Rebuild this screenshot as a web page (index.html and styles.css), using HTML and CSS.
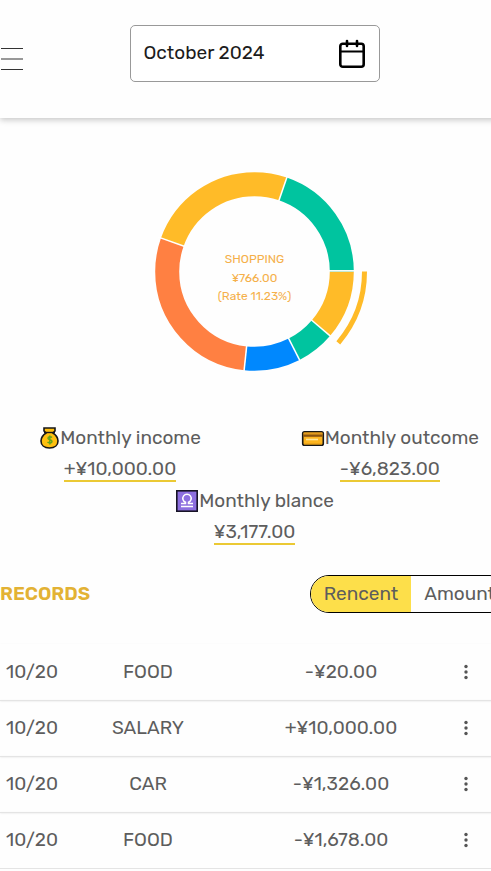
FILE: index.html
```html
<!DOCTYPE html>
<html lang="en">
<head>
<meta charset="utf-8">
<meta name="viewport" content="width=device-width, initial-scale=1">
<title>Monthly statistics</title>
<link rel="stylesheet" href="styles.css">
</head>
<body>
<div class="page">
  <header class="header">
    <button class="menu" type="button" aria-label="Menu">
      <svg width="24" height="24" viewBox="0 0 24 24"><path d="M1 1.500h22M1 12h22M1 22.500h22"/></svg>
    </button>
    <div class="month">
      <input class="month-input" type="text" value="October 2024" aria-label="Month" readonly>
      <button class="month-button" type="button" aria-label="Pick month">
        <svg width="28" height="30" viewBox="0 0 28 30"><rect x="2.300" y="4.800" width="23.400" height="23" rx="2.500"/><path d="M2 12.500h24" stroke-width="2"/><path d="M9 2v5M19 2v5" stroke-linecap="round"/></svg>
      </button>
    </div>
  </header>
  <main>
    <section class="chart" aria-label="Outcome by category">
      <svg class="donut" width="228" height="228" viewBox="-113.500 -113.500 228 228">
        <g class="slices">
          <circle class="gold" r="87.300" pathLength="360" stroke-dasharray="40.400 360"/>
          <circle class="green" r="87.300" pathLength="360" stroke-dasharray="22.600 360" stroke-dashoffset="-40.400"/>
          <circle class="blue" r="87.300" pathLength="360" stroke-dasharray="33 360" stroke-dashoffset="-63"/>
          <circle class="orange" r="87.300" pathLength="360" stroke-dasharray="103.700 360" stroke-dashoffset="-96"/>
          <circle class="gold" r="87.300" pathLength="360" stroke-dasharray="89.300 360" stroke-dashoffset="-199.700"/>
          <circle class="green" r="87.300" pathLength="360" stroke-dasharray="71 360" stroke-dashoffset="-289"/>
        </g>
        <g class="gaps">
          <path d="M74-.7h28"/>
          <path d="M74 0h28" transform="rotate(40.400)"/>
          <path d="M74 0h28" transform="rotate(63)"/>
          <path d="M74 0h28" transform="rotate(96)"/>
          <path d="M74 0h28" transform="rotate(199.700)"/>
          <path d="M74 0h28" transform="rotate(289)"/>
        </g>
        <circle class="gold active" r="110" pathLength="360" stroke-dasharray="40.400 360"/>
        <g class="donut-text">
          <text y="-9">SHOPPING</text>
          <text y="10">¥766.00</text>
          <text y="28">(Rate 11.23%)</text>
        </g>
      </svg>
    </section>
    <section class="summary">
      <div class="stat">
        <h2 class="stat-title">
          <svg width="21" height="22" viewBox="0 0 21 22"><path d="M5 1h11v3l-2 2c3 2 5 5 5 8 0 4-3 7-8.500 7S2 18 2 14c0-3 2-6 5-8L5 4z" fill="#ffc010" stroke="#171717" stroke-width="1.600"/><path d="M5 5.500h11" stroke="#171717" stroke-width="1.400"/><path d="M13 10.500c-1-1-4-1-4 .7 0 2 4 1.200 4 3.200 0 1.800-3 2-4.500.6M10.800 8.500v9" fill="none" stroke="#64a51a" stroke-width="1.500"/></svg>
          Monthly income</h2>
        <p class="stat-value">+¥10,000.00</p>
      </div>
      <div class="stat">
        <h2 class="stat-title">
          <svg width="24" height="22" viewBox="0 0 24 22"><rect x="1.700" y="4.700" width="20.600" height="13.600" rx="1.800" fill="#fdb51f" stroke="#171717" stroke-width="1.600"/><path d="M2.500 5.500h19v2h-19z" fill="#e39a1c"/><path d="M2.500 7.500h19v2.300h-19z" fill="#8a5310"/><path d="M5 12.500h12" stroke="#ffe59a" stroke-width="1.600"/><path d="M3 17h18" stroke="#dc9717"/></svg>
          Monthly outcome</h2>
        <p class="stat-value">-¥6,823.00</p>
      </div>
      <div class="stat stat-wide">
        <h2 class="stat-title">
          <svg width="24" height="22" viewBox="0 0 24 22"><rect x="1.800" y=".8" width="20.400" height="20.400" fill="#8d6fdf" stroke="#171326" stroke-width="1.600"/><path d="M6 13.500h4.500v-1.200a4.200 4.200 0 1 1 3 0v1.200H18M6 16.500h12" fill="none" stroke="#fff" stroke-width="1.500"/></svg>
          Monthly blance</h2>
        <p class="stat-value">¥3,177.00</p>
      </div>
    </section>
    <section class="records">
      <div class="records-head">
        <h2 class="records-title">RECORDS</h2>
        <div class="sort">
          <button class="sort-option selected" type="button">Rencent</button>
          <button class="sort-option" type="button">Amount</button>
        </div>
      </div>
      <table class="list">
        <colgroup><col class="col-date"><col class="col-type"><col class="col-amount"><col class="col-more"><col></colgroup>
        <tbody>
          <tr><td>10/20</td><td>FOOD</td><td>-¥20.00</td><td><button class="more" type="button" aria-label="More"><svg width="6" height="16" viewBox="0 0 6 16"><circle cx="3" cy="2.500" r="1.700"/><circle cx="3" cy="8" r="1.700"/><circle cx="3" cy="13.500" r="1.700"/></svg></button></td><td></td></tr>
          <tr><td>10/20</td><td>SALARY</td><td>+¥10,000.00</td><td><button class="more" type="button" aria-label="More"><svg width="6" height="16" viewBox="0 0 6 16"><circle cx="3" cy="2.500" r="1.700"/><circle cx="3" cy="8" r="1.700"/><circle cx="3" cy="13.500" r="1.700"/></svg></button></td><td></td></tr>
          <tr><td>10/20</td><td>CAR</td><td>-¥1,326.00</td><td><button class="more" type="button" aria-label="More"><svg width="6" height="16" viewBox="0 0 6 16"><circle cx="3" cy="2.500" r="1.700"/><circle cx="3" cy="8" r="1.700"/><circle cx="3" cy="13.500" r="1.700"/></svg></button></td><td></td></tr>
          <tr><td>10/20</td><td>FOOD</td><td>-¥1,678.00</td><td><button class="more" type="button" aria-label="More"><svg width="6" height="16" viewBox="0 0 6 16"><circle cx="3" cy="2.500" r="1.700"/><circle cx="3" cy="8" r="1.700"/><circle cx="3" cy="13.500" r="1.700"/></svg></button></td><td></td></tr>
        </tbody>
      </table>
    </section>
  </main>
</div>
</body>
</html>
```
FILE: styles.css
```css
* {
  box-sizing: border-box;
}

body {
  margin: 0;
  overflow-x: hidden;
  background: #fefefe;
  color: #5d5d5d;
  font-family: Rubik, Roboto, sans-serif;
  font-size: 19px;
  font-weight: 400;
  line-height: 24px;
}

button,
input {
  padding: 0;
  border: 0;
  background: none;
  color: inherit;
  font: inherit;
}

h2,
p {
  margin: 0;
}

svg {
  display: block;
}

/* The content runs slightly past the right edge of the window. */
.page {
  width: calc(100% + 18px);
}

.header {
  display: grid;
  grid-template-columns: 1fr 250px 1fr;
  align-items: center;
  padding: 25px 0 36px;
  box-shadow: 0 2px 6px rgba(0, 0, 0, 0.22);
}

.menu {
  justify-self: start;
  margin-top: 10px;
}

.menu path {
  stroke: #333;
}

.month {
  display: flex;
  align-items: center;
  height: 57px;
  padding: 0 13px;
  border: 1px solid #999;
  border-radius: 5px;
  background: #fff;
  color: #1c1c1c;
}

.month-input {
  flex: 1;
  min-width: 0;
  padding-bottom: 2px;
}

.month-button svg {
  fill: none;
  stroke: #000;
  stroke-width: 2.6;
}

.chart {
  display: flex;
  justify-content: center;
  padding: 40px 0 38px;
}

.slices circle {
  fill: none;
  stroke-width: 24;
}

.gold {
  stroke: #ffbb28;
}

.green {
  stroke: #00c49f;
}

.blue {
  stroke: #0088fe;
}

.orange {
  stroke: #ff8042;
}

.active {
  fill: none;
  stroke-width: 5;
}

.gaps {
  stroke: #fff;
  stroke-width: 1.5;
}

.donut-text {
  fill: #f5b04a;
  font-size: 12px;
  text-anchor: middle;
}

.summary {
  display: grid;
  grid-template-columns: 180px auto;
  justify-content: space-between;
  row-gap: 5px;
  padding: 0 30px;
}

.stat {
  display: flex;
  flex-direction: column;
  align-items: center;
  gap: 6px;
}

.stat-wide {
  grid-column: 1 / -1;
}

.stat-title {
  display: flex;
  align-items: center;
  height: 27px;
  font-size: 19px;
  font-weight: inherit;
  line-height: 27px;
}

.stat-value {
  height: 25px;
  border-bottom: 2px solid #ebc934;
}

.records {
  padding-top: 30px;
}

.records-head {
  display: flex;
  justify-content: space-between;
  align-items: center;
}

.records-title {
  color: #e3b234;
  font-size: 19px;
  font-weight: 600;
}

.sort {
  display: flex;
  overflow: hidden;
  height: 38px;
  border: 1px solid #000;
  border-radius: 19px;
}

.sort-option {
  padding: 0 13px;
}

.selected {
  background: #fddf4a;
}

.list {
  width: 100%;
  margin-top: 31px;
  border-collapse: collapse;
  table-layout: fixed;
}

.list tr {
  height: 56px;
  border-bottom: 1px solid #e4e4e4;
  box-shadow: 0 1px 2px rgba(0, 0, 0, 0.12);
}

.list td {
  padding: 0;
  text-align: center;
}

.col-date {
  width: 64px;
}

.col-type {
  width: 168px;
}

.col-amount {
  width: 218px;
}

.col-more {
  width: 32px;
}

.more {
  padding: 8px;
  vertical-align: middle;
}

.more svg {
  fill: #555;
}
```
